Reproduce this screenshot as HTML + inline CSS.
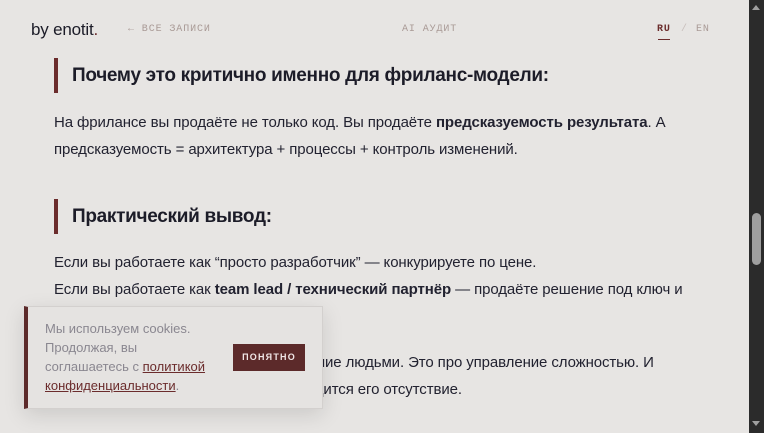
<!DOCTYPE html>
<html><head><meta charset="utf-8"><style>
*{margin:0;padding:0;box-sizing:border-box}
html,body{width:764px;height:433px;overflow:hidden;background:#e7e5e3;font-family:"Liberation Sans","Noto Sans CJK SC",sans-serif;color:#1e1e24}
.sb{position:absolute;left:749px;top:0;width:15px;height:433px;background:#2b2b2b}
.thumb{position:absolute;left:3px;top:213px;width:9px;height:52px;border-radius:5px;background:#9f9f9f}
.up{position:absolute;left:3px;top:5px;border-left:4.5px solid transparent;border-right:4.5px solid transparent;border-bottom:5px solid #a0a0a0}
.dn{position:absolute;left:3px;top:421px;border-left:4.5px solid transparent;border-right:4.5px solid transparent;border-top:5px solid #a0a0a0}
.abs{position:absolute;white-space:nowrap}
.nav{font-family:"Liberation Mono",monospace;font-size:10px;letter-spacing:0.9px;color:#a99a96}
h2{position:absolute;left:54px;border-left:4px solid #6b2c2c;padding-left:14px;font-size:19px;font-weight:bold;height:35px;line-height:35px;letter-spacing:-0.3px;color:#1c1c28}
p{position:absolute;left:54px;font-size:15px;line-height:27px;color:#222230;white-space:nowrap;letter-spacing:-0.1px}
.ck{position:absolute;left:24px;top:306px;width:299px;height:103px;background:#e5e3e1;border:1px solid #d3d0ce;border-left:4px solid #5c2a2a;box-shadow:0 6px 20px rgba(0,0,0,.12)}
.ck .t{position:absolute;left:17px;top:12px;font-size:13px;line-height:19px;color:#8a8790}
.ck a{color:#6b2c2c;text-decoration:underline}
.btn{position:absolute;left:205px;top:37px;width:72px;height:27px;background:#5c2a2a;color:#f0e6e6;font-size:9px;font-weight:bold;letter-spacing:1.2px;text-align:center;line-height:27px}
</style></head><body>
<div class="abs" style="left:31px;top:20px;font-size:17px;color:#1c1c28;letter-spacing:-0.2px">by enotit<span style="color:#6b2c2c">.</span></div>
<div class="abs nav" style="left:128px;top:24px">← ВСЕ ЗАПИСИ</div>
<div class="abs nav" style="left:402px;top:24px">AI АУДИТ</div>
<div class="abs nav" style="left:657px;top:24px;color:#6b2c2c;font-weight:bold">RU</div>
<div class="abs" style="left:658px;top:39px;width:12px;height:1px;background:#6b2c2c"></div>
<div class="abs nav" style="left:681px;top:24px;color:#c8bfbc">/</div>
<div class="abs nav" style="left:696px;top:24px">EN</div>
<h2 style="top:58px">Почему это критично именно для фриланс-модели:</h2>
<p style="top:109px">На фрилансе вы продаёте не только код. Вы продаёте <b>предсказуемость результата</b>. А</p>
<p style="top:136px">предсказуемость = архитектура + процессы + контроль изменений.</p>
<h2 style="top:199px">Практический вывод:</h2>
<p style="top:249px">Если вы работаете как “просто разработчик” — конкурируете по цене.</p>
<p style="top:276px">Если вы работаете как <b>team lead / технический партнёр</b> — продаёте решение под ключ и</p>
<p style="top:349px">Быть тимлидом — это не про управление людьми. Это про управление сложностью. И</p>
<p style="top:376px">клиент понимает, как дорого ему обходится его отсутствие.</p>
<div class="ck"><div class="t">Мы используем cookies.<br>Продолжая, вы<br>соглашаетесь с <a>политикой</a><br><a>конфиденциальности</a>.</div><div class="btn">ПОНЯТНО</div></div>
<div class="sb"><div class="up"></div><div class="thumb"></div><div class="dn"></div></div>
</body></html>
